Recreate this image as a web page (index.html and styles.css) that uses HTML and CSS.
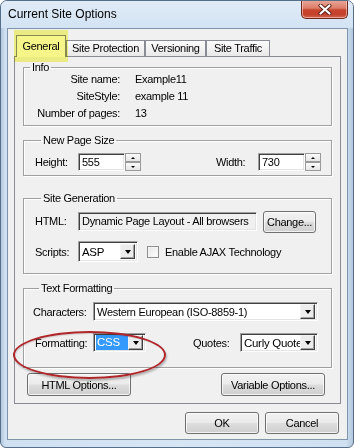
FILE: index.html
```html
<!DOCTYPE html>
<html>
<head>
<meta charset="utf-8">
<link rel="stylesheet" href="styles.css">
</head>
<body>
<div class="window">
  <div class="titlebar">
    <span class="title">Current Site Options</span>
    <div class="close">
      <svg width="14" height="11" viewBox="0 0 14 11">
        <path d="M2.5 1.5 L11.5 9.5 M11.5 1.5 L2.5 9.5" stroke="#5a1f18" stroke-width="4" stroke-linecap="round"/>
        <path d="M2.5 1.5 L11.5 9.5 M11.5 1.5 L2.5 9.5" stroke="#ffffff" stroke-width="2.2" stroke-linecap="round"/>
      </svg>
    </div>
  </div>
  <div class="client">
    <div class="tabs">
      <div class="tab selected w-gen">General</div>
      <div class="tab w-prot">Site Protection</div>
      <div class="tab w-ver">Versioning</div>
      <div class="tab w-traf">Site Traffic</div>
    </div>
    <div class="panel">
      <fieldset class="group info">
        <legend>Info</legend>
        <div class="info-grid">
          <span class="k">Site name:</span><span>Example11</span>
          <span class="k">SiteStyle:</span><span>example 11</span>
          <span class="k">Number of pages:</span><span>13</span>
        </div>
      </fieldset>

      <fieldset class="group pagesize">
        <legend>New Page Size</legend>
        <div class="size-row">
          <div class="size-item">
            <span class="lbl lbl-h">Height:</span>
            <div class="field num">555</div>
            <div class="spin"><div class="spin-btn"><i class="up"></i></div><div class="spin-btn"><i class="down"></i></div></div>
          </div>
          <div class="size-item">
            <span class="lbl lbl-w">Width:</span>
            <div class="field num">730</div>
            <div class="spin"><div class="spin-btn"><i class="up"></i></div><div class="spin-btn"><i class="down"></i></div></div>
          </div>
        </div>
      </fieldset>

      <fieldset class="group sitegen">
        <legend>Site Generation</legend>
        <div class="row row-html">
          <span class="lbl lbl-h">HTML:</span>
          <div class="field readonly">Dynamic Page Layout - All browsers</div>
          <div class="btn btn-change">Change...</div>
        </div>
        <div class="row row-scripts">
          <span class="lbl lbl-h">Scripts:</span>
          <div class="combo c-asp"><span class="val">ASP</span><span class="arrow"><i></i></span></div>
          <span class="check"></span>
          <span class="check-lbl">Enable AJAX Technology</span>
        </div>
      </fieldset>

      <fieldset class="group textfmt">
        <legend>Text Formatting</legend>
        <div class="row row-chars">
          <span class="lbl lbl-c">Characters:</span>
          <div class="combo c-chars"><span class="val">Western European (ISO-8859-1)</span><span class="arrow"><i></i></span></div>
        </div>
        <div class="row row-fmt">
          <span class="lbl lbl-f">Formatting:</span>
          <div class="combo c-fmt"><span class="val"><span class="sel">CSS</span></span><span class="arrow"><i></i></span></div>
          <span class="lbl lbl-q">Quotes:</span>
          <div class="combo c-quotes"><span class="val">Curly Quotes</span><span class="arrow"><i></i></span></div>
        </div>
        <div class="ellipse"></div>
      </fieldset>

      <div class="panel-buttons">
        <div class="btn btn-opt">HTML Options...</div>
        <div class="btn btn-opt">Variable Options...</div>
      </div>
    </div>
    <div class="dialog-buttons">
      <div class="btn btn-dlg">OK</div>
      <div class="btn btn-dlg">Cancel</div>
    </div>
    <div class="highlight"></div>
  </div>
</div>
</body>
</html>
```
FILE: styles.css
```css
* { box-sizing: border-box; }
html, body { margin: 0; padding: 0; background: #ffffff; }
body {
  font-family: "Liberation Sans", Arial, sans-serif;
  font-size: 11px;
  letter-spacing: -0.3px;
  color: #000;
}

.window {
  width: 354px;
  height: 448px;
  display: flex;
  flex-direction: column;
  background: linear-gradient(90deg, #b3c8dc 0px, #cfe0f1 4px, #d6e6f5 50%, #cfe0f1 98%, #b3c8dc 100%);
  border: 1px solid #566f89;
  border-radius: 7px 7px 6px 6px;
  overflow: hidden;
}

.titlebar {
  height: 27px;
  flex: none;
  display: flex;
  justify-content: space-between;
  align-items: flex-start;
  background: linear-gradient(#e0ebf7, #d3e3f3);
}
.title {
  font-size: 12px;
  letter-spacing: 0;
  padding: 6px 0 0 7px;
  line-height: 15px;
  color: #000;
}
.close {
  width: 47px;
  height: 19px;
  margin: -1px 5px 0 0;
  border: 1px solid #6e2a20;
  border-top: none;
  border-radius: 0 0 5px 5px;
  background: linear-gradient(#eaa99a 0%, #dc7e6a 45%, #c8452f 55%, #c3412c 80%, #d5664f 100%);
  box-shadow: inset 0 0 0 1px rgba(255, 220, 210, 0.55);
  display: flex;
  align-items: center;
  justify-content: center;
}

.client {
  flex: 1;
  margin: 0 5px 7px 6px;
  border: 1px solid #7f95ac;
  background: #f0f0f0;
  padding: 6px 6px 0 6px;
  display: flex;
  flex-direction: column;
  position: relative;
}

.tabs {
  height: 21px;
  flex: none;
  display: flex;
  align-items: flex-end;
  margin-left: 2px;
  position: relative;
  z-index: 2;
}
.tab {
  height: 16px;
  line-height: 15px;
  border: 1px solid #898c95;
  border-bottom: none;
  background: linear-gradient(#fbfbfb, #e9e9e9);
  text-align: center;
  white-space: nowrap;
}
.tab.selected {
  height: 22px;
  margin-bottom: -1px;
  padding-top: 4px;
  line-height: 13px;
  background: #fafafa;
}
.w-gen { width: 50px; }
.w-prot { width: 79px; }
.w-ver { width: 61px; }
.w-traf { width: 64px; }

.panel {
  flex: none;
  border: 1px solid #898c95;
  padding: 4px 8px 7px 8px;
  display: flex;
  flex-direction: column;
  background: #f0f0f0;
}

.group {
  margin: 0;
  padding: 0;
  border: 1px solid #a0a0a0;
  box-shadow: inset 1px 1px 0 #ffffff, 1px 1px 0 #ffffff;
  min-width: 0;
  position: relative;
}
.group legend {
  margin-left: 6px;
  padding: 0 2px;
  line-height: 12px;
  height: 12px;
}
.info { padding: 0 0 5px 0; }
.info-grid {
  display: grid;
  grid-template-columns: 96px 1fr;
  column-gap: 15px;
  row-gap: 4px;
  line-height: 13px;
}
.info-grid .k { text-align: right; }

.pagesize { margin-top: 8px; padding: 7px 10px 4px 11px; }
.size-row { display: flex; justify-content: space-between; height: 18px; }
.size-item { display: flex; align-items: center; }
.lbl { flex: none; white-space: nowrap; }
.lbl-h { width: 43px; }
.lbl-w { width: 42px; }

.field {
  background: #fff;
  border: 1px solid;
  border-color: #a0a0a0 #ffffff #ffffff #a0a0a0;
  box-shadow: inset 1px 1px 0 #404040, inset -1px -1px 0 #e3e3e3;
  white-space: nowrap;
  overflow: hidden;
}
.num { width: 47px; height: 18px; line-height: 16px; padding-left: 3px; }
.spin { width: 16px; height: 18px; display: flex; flex-direction: column; }
.spin-btn {
  height: 9px;
  border: 1px solid #9a9a9a;
  background: linear-gradient(#fafafa, #e6e6e6);
  display: flex;
  align-items: center;
  justify-content: center;
}
.spin-btn i { width: 0; height: 0; border-left: 2px solid transparent; border-right: 2px solid transparent; }
.spin-btn .up { border-bottom: 2px solid #000; }
.spin-btn .down { border-top: 2px solid #000; }

.sitegen { margin-top: 16px; padding: 6px 8px 11px 11px; }
.row { display: flex; align-items: center; }
.row-html { height: 22px; }
.readonly { background: #f0f0f0; width: 179px; height: 19px; line-height: 17px; padding-left: 3px; }
.btn {
  border: 1px solid #707070;
  border-radius: 3px;
  background: linear-gradient(#f2f2f2 0%, #ebebeb 48%, #dddddd 52%, #cfcfcf 100%);
  box-shadow: inset 0 0 0 1px rgba(255, 255, 255, 0.7);
  text-align: center;
  white-space: nowrap;
  display: flex;
  align-items: center;
  justify-content: center;
}
.btn-change { width: 53px; height: 22px; margin-left: 6px; margin-top: 2px; }
.row-scripts { margin-top: 9px; height: 21px; }

.combo {
  display: flex;
  background: #fff;
  border: 1px solid;
  border-color: #a0a0a0 #ffffff #ffffff #a0a0a0;
  box-shadow: inset 1px 1px 0 #404040, inset -1px -1px 0 #e3e3e3;
  padding: 2px 2px 2px 2px;
}
.combo .val {
  flex: 1;
  min-width: 0;
  overflow: hidden;
  white-space: nowrap;
  padding-left: 1px;
  display: flex;
  align-items: center;
  font-size: 11.5px;
}
.combo .arrow {
  flex: none;
  width: 15px;
  border: 1px solid;
  border-color: #f4f4f4 #404040 #404040 #f4f4f4;
  box-shadow: inset -1px -1px 0 #a0a0a0;
  background: #ececec;
  display: flex;
  align-items: center;
  justify-content: center;
}
.combo .arrow i {
  width: 0; height: 0;
  border-left: 3.5px solid transparent;
  border-right: 3.5px solid transparent;
  border-top: 4px solid #000;
}
.c-asp { width: 60px; height: 21px; }
.check {
  width: 12px; height: 12px;
  margin-left: 9px;
  border: 1px solid #8e8f8f;
  background: linear-gradient(135deg, #e6e6e6, #ffffff);
  box-shadow: inset 0 0 0 1px #f4f4f4;
}
.check-lbl { margin-left: 6px; white-space: nowrap; }

.textfmt { margin-top: 8px; padding: 8px 8px 15px 9px; }
.row-chars { height: 19px; }
.lbl-c { width: 60px; }
.c-chars { width: 225px; height: 19px; padding: 1px 2px 1px 2px; }
.c-chars .val { font-size: 11px; }
.row-fmt { margin-top: 12px; height: 19px; }
.lbl-f { width: 58px; margin-left: 2px; }
.c-fmt { width: 53px; height: 19px; padding: 1px 2px 1px 2px; }
.c-fmt .val { padding-left: 0; }
.sel { background: #3399ff; color: #fff; display: block; width: 33px; height: 15px; line-height: 15px; padding-left: 1px; }
.lbl-q { width: 47px; margin-left: 47px; }
.c-quotes { width: 78px; height: 19px; padding: 1px 2px 1px 2px; }

.ellipse {
  position: absolute;
  left: -11px;
  top: 37px;
  width: 153px;
  height: 48px;
  border: 2px solid #b0262a;
  border-radius: 50%;
  box-shadow: 1px 2px 2px rgba(0, 0, 0, 0.25), inset 1px 1px 1px rgba(0, 0, 0, 0.12);
  pointer-events: none;
}

.panel-buttons {
  margin: 5px 7px 0 4px;
  display: flex;
  justify-content: space-between;
}
.btn-opt { width: 104px; height: 23px; }

.dialog-buttons {
  margin: 8px 2px 0 0;
  display: flex;
  justify-content: flex-end;
  gap: 6px;
}
.btn-dlg { width: 74px; height: 22px; }

.highlight {
  position: absolute;
  left: 6px;
  top: 1px;
  width: 54px;
  height: 32px;
  background: #fafa8c;
  mix-blend-mode: multiply;
  z-index: 5;
  pointer-events: none;
}
```
